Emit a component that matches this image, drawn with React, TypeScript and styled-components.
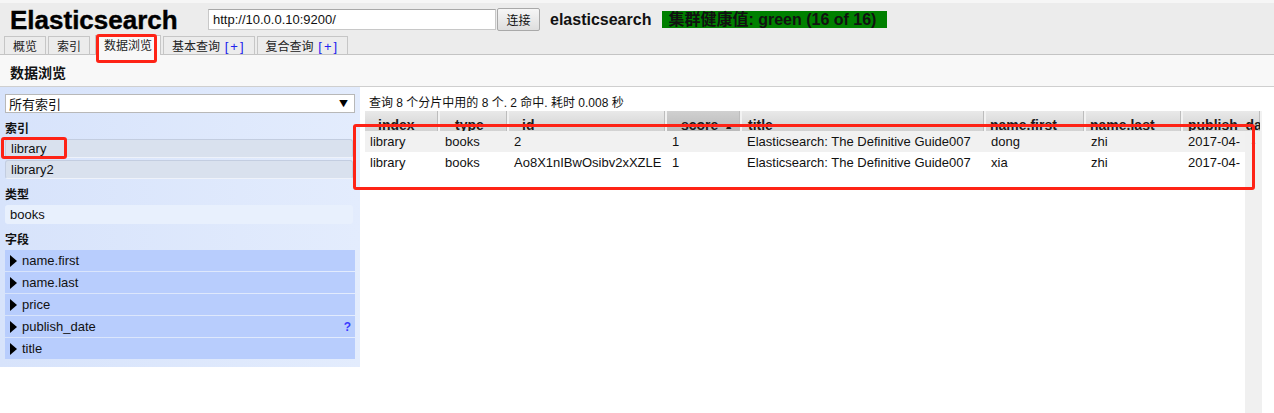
import styled, { createGlobalStyle } from "styled-components";

const GlobalStyle = createGlobalStyle`
  html, body {
    margin: 0;
    padding: 0;
    background: #fff;
  }
  body {
    font-family: "Liberation Sans", "Noto Sans CJK SC", sans-serif;
    font-size: 13px;
    color: #111;
  }
`;

type Column = { key: string; label: string; width: number; pad: number; sorted?: boolean };

const columns: Column[] = [
  { key: "index", label: "index", width: 75, pad: 13 },
  { key: "type", label: "type", width: 69, pad: 15 },
  { key: "id", label: "id", width: 158, pad: 13 },
  { key: "score", label: "score", width: 75, pad: 14, sorted: true },
  { key: "title", label: "title", width: 244, pad: 6 },
  { key: "first", label: "name.first", width: 100, pad: 4 },
  { key: "last", label: "name.last", width: 97, pad: 4 },
  { key: "date", label: "publish_date", width: 79, pad: 5 },
];

const rows = [
  ["library", "books", "2", "1", "Elasticsearch: The Definitive Guide007", "dong", "zhi", "2017-04-01"],
  ["library", "books", "Ao8X1nIBwOsibv2xXZLE", "1", "Elasticsearch: The Definitive Guide007", "xia", "zhi", "2017-04-01"],
];

const fields = ["name.first", "name.last", "price", "publish_date", "title"];

// 헤더는 스크롤바 위까지, 본문은 스크롤바 앞에서 잘림
const headTemplate = columns.map((c) => `${c.width}px`).join(" ");
const bodyTemplate = columns
  .map((c, i) => (i === columns.length - 1 ? "57px" : `${c.width}px`))
  .join(" ");

const App = () => {
  return (
    <Page>
      <GlobalStyle />
      <Header>
        <TopRow>
          <Logo>Elasticsearch</Logo>
          <UrlInput>http://10.0.0.10:9200/</UrlInput>
          <ConnectButton>连接</ConnectButton>
          <ClusterName>elasticsearch</ClusterName>
          <Health>集群健康值: green (16 of 16)</Health>
        </TopRow>
        <Tabs>
          <Tab>概览</Tab>
          <Tab>索引</Tab>
          <Tab $active>数据浏览</Tab>
          <Tab>
            基本查询 <Plus>[+]</Plus>
          </Tab>
          <Tab>
            复合查询 <Plus>[+]</Plus>
          </Tab>
        </Tabs>
      </Header>

      <SectionBar>数据浏览</SectionBar>

      <Main>
        <Sidebar>
          <FakeSelect>
            <span>所有索引</span>
            <SelectArrow>▼</SelectArrow>
          </FakeSelect>
          <GroupTitle>索引</GroupTitle>
          <IndexItem>library</IndexItem>
          <IndexItem>library2</IndexItem>
          <GroupTitle>类型</GroupTitle>
          <TypeItem>books</TypeItem>
          <GroupTitle>字段</GroupTitle>
          <FieldList>
            {fields.map((f) => (
              <FieldRow key={f}>
                <Caret />
                <FieldName>{f}</FieldName>
                {f === "publish_date" && <Help>?</Help>}
              </FieldRow>
            ))}
          </FieldList>
        </Sidebar>

        <Results>
          <Info>查询 8 个分片中用的 8 个. 2 命中. 耗时 0.008 秒</Info>
          <Table>
            <HeadRow>
              {columns.map((c) => (
                <HeadCell key={c.key} $pad={c.pad} $sorted={c.sorted}>
                  {c.label}
                  {c.sorted && <SortArrow>▲</SortArrow>}
                </HeadCell>
              ))}
            </HeadRow>
            <BodyWrap>
              <BodyRows>
                {rows.map((r, i) => (
                  <BodyRow key={i} $odd={i % 2 === 0}>
                    {r.map((v, j) => (
                      <Cell key={j}>{v}</Cell>
                    ))}
                  </BodyRow>
                ))}
              </BodyRows>
              <ScrollTrack>
                <ScrollUp>▲</ScrollUp>
              </ScrollTrack>
            </BodyWrap>
          </Table>
        </Results>
      </Main>

      <Mark $x={96} $y={34} $w={61} $h={29} />
      <Mark $x={1} $y={137} $w={66} $h={22} />
      <Mark $x={353} $y={124} $w={902} $h={66} />
    </Page>
  );
};

export default App;

// 스타일
const Page = styled.div`
  position: relative;
  width: 1274px;
  min-height: 100vh;
  display: flex;
  flex-direction: column;
  overflow: hidden;
`;

const Header = styled.header`
  background: #ececec;
  border-top: 3px solid #f6f6f6;
  border-bottom: 1px solid #c4c4c4;
`;

const TopRow = styled.div`
  display: flex;
  align-items: center;
  height: 33px;
  padding-left: 10px;
`;

const Logo = styled.h1`
  margin: 0;
  width: 198px;
  font-size: 26px;
  font-weight: 700;
  color: #000;
  line-height: 30px;
  -webkit-text-stroke: 0.4px #000;
`;

const UrlInput = styled.div`
  box-sizing: border-box;
  width: 288px;
  height: 21px;
  background: #fff;
  border: 1px solid #c8c8c8;
  border-top-color: #a8a8a8;
  padding: 0 4px;
  font-size: 13px;
  line-height: 19px;
`;

const ConnectButton = styled.button`
  box-sizing: border-box;
  height: 23px;
  width: 43px;
  margin-left: 1px;
  padding: 0;
  border: 1px solid #a9a9a9;
  border-radius: 2px;
  background: linear-gradient(#f6f6f6, #dedede);
  font-family: "Noto Sans CJK SC", sans-serif;
  font-size: 12px;
  color: #111;
`;

const ClusterName = styled.span`
  margin-left: 10px;
  font-size: 16px;
  font-weight: 700;
  color: #111;
`;

const Health = styled.span`
  margin-left: 11px;
  background: #008000;
  color: #111;
  font-size: 16px;
  font-weight: 700;
  line-height: 17px;
  padding: 0 11px 0 6px;
`;

const Tabs = styled.nav`
  display: flex;
  align-items: flex-end;
  gap: 2px;
  height: 19px;
  padding-left: 4px;
  margin-bottom: -1px;
`;

const Tab = styled.div<{ $active?: boolean }>`
  box-sizing: border-box;
  height: ${({ $active }) => ($active ? "20px" : "19px")};
  padding: 0 8px;
  border: 1px solid #c6c6c6;
  border-bottom: ${({ $active }) => ($active ? "none" : "1px solid #c4c4c4")};
  background: ${({ $active }) => ($active ? "#f8f8f8" : "#ececec")};
  font-family: "Noto Sans CJK SC", sans-serif;
  font-size: 12px;
  line-height: 18px;
  color: #222;
  margin-left: ${({ $active }) => ($active ? "3px" : "0")};
`;

const Plus = styled.span`
  color: #2222ee;
  font-family: "Liberation Sans", sans-serif;
  font-size: 13px;
  letter-spacing: 2px;
  margin-left: 2px;
`;

const SectionBar = styled.div`
  height: 31px;
  background: #f8f8f8;
  border-bottom: 1px solid #cfcfcf;
  padding-left: 10px;
  font-family: "Noto Sans CJK SC", sans-serif;
  font-size: 14px;
  font-weight: 700;
  line-height: 34px;
  color: #111;
`;

const Main = styled.div`
  flex: 1;
  display: flex;
  align-items: stretch;
`;

const Sidebar = styled.aside`
  box-sizing: border-box;
  width: 360px;
  align-self: flex-start;
  padding: 7px 5px 8px;
  background: linear-gradient(to right, #d7e3fb, #e3ecfd);
`;

const FakeSelect = styled.div`
  box-sizing: border-box;
  display: flex;
  justify-content: space-between;
  align-items: center;
  height: 19px;
  width: 350px;
  background: #fff;
  border: 1px solid #b8b8b8;
  padding: 0 6px 0 3px;
  font-family: "Noto Sans CJK SC", sans-serif;
  font-size: 13px;
  color: #111;
`;

const SelectArrow = styled.span`
  font-size: 9px;
  color: #000;
`;

const GroupTitle = styled.div`
  font-family: "Noto Sans CJK SC", sans-serif;
  font-size: 12px;
  font-weight: 700;
  height: 22px;
  line-height: 22px;
  margin-top: 4px;
  color: #111;
`;

const IndexItem = styled.div`
  box-sizing: border-box;
  height: 19px;
  width: 348px;
  margin-bottom: 2px;
  padding-left: 5px;
  background: #d9e1ee;
  border: 1px solid #c3cde0;
  border-bottom-color: #eef2fa;
  border-radius: 3px;
  font-size: 13px;
  line-height: 17px;
  color: #111;
`;

const TypeItem = styled.div`
  height: 19px;
  width: 348px;
  padding-left: 5px;
  box-sizing: border-box;
  background: #e8f0fd;
  border-radius: 3px;
  font-size: 13px;
  line-height: 19px;
  color: #111;
`;

const FieldList = styled.div`
  display: flex;
  flex-direction: column;
  gap: 1px;
`;

const FieldRow = styled.div`
  display: flex;
  align-items: center;
  height: 21px;
  width: 350px;
  padding-left: 5px;
  box-sizing: border-box;
  background: #b8cdfd;
  font-size: 13px;
  color: #111;
`;

const Caret = styled.span`
  width: 0;
  height: 0;
  border-top: 6px solid transparent;
  border-bottom: 6px solid transparent;
  border-left: 7px solid #000;
  margin-right: 5px;
`;

const FieldName = styled.span`
  flex: 1;
`;

const Help = styled.span`
  color: #3a3aff;
  font-weight: 700;
  font-size: 12px;
  margin-right: 4px;
`;

const Results = styled.section`
  flex: 1;
  display: flex;
  flex-direction: column;
  padding: 8px 12px 0 5px;
`;

const Info = styled.div`
  font-family: "Liberation Sans", "Noto Sans CJK SC", sans-serif;
  font-size: 12px;
  line-height: 16px;
  padding-left: 4px;
  color: #111;
`;

const Table = styled.div`
  flex: 1;
  display: flex;
  flex-direction: column;
`;

const HeadRow = styled.div`
  display: grid;
  grid-template-columns: ${headTemplate};
  height: 20px;
  overflow: hidden;
`;

const HeadCell = styled.div<{ $pad: number; $sorted?: boolean }>`
  box-sizing: border-box;
  height: 20px;
  overflow: hidden;
  white-space: nowrap;
  padding: 6px 0 0 ${({ $pad }) => $pad}px;
  background: ${({ $sorted }) =>
    $sorted ? "linear-gradient(#d0d0d0, #bababa)" : "linear-gradient(#e9e9e9, #d2d2d2)"};
  border-right: 2px solid #f2f2f2;
  box-shadow: inset -1px 0 0 #bdbdbd;
  font-size: 14px;
  font-weight: 700;
  line-height: 16px;
  color: #1a1a1a;
`;

const SortArrow = styled.span`
  font-size: 9px;
  margin-left: 6px;
  vertical-align: 1px;
`;

const BodyWrap = styled.div`
  flex: 1;
  display: flex;
`;

const BodyRows = styled.div`
  flex: 1;
  overflow: hidden;
`;

const BodyRow = styled.div<{ $odd: boolean }>`
  display: grid;
  grid-template-columns: ${bodyTemplate};
  height: 21px;
  background: ${({ $odd }) => ($odd ? "#f1f1f1" : "#fff")};
`;

const Cell = styled.div`
  padding-left: 5px;
  white-space: nowrap;
  overflow: hidden;
  font-size: 13px;
  line-height: 21px;
  color: #111;
`;

const ScrollTrack = styled.div`
  width: 17px;
  background: #f0f0f0;
  text-align: center;
`;

const ScrollUp = styled.span`
  display: block;
  margin-top: 7px;
  font-size: 7px;
  line-height: 8px;
  color: #bdbdbd;
`;

const Mark = styled.div<{ $x: number; $y: number; $w: number; $h: number }>`
  position: absolute;
  left: ${({ $x }) => $x}px;
  top: ${({ $y }) => $y}px;
  width: ${({ $w }) => $w}px;
  height: ${({ $h }) => $h}px;
  box-sizing: border-box;
  border: 3px solid #fe2316;
  border-radius: 3px;
  pointer-events: none;
`;
